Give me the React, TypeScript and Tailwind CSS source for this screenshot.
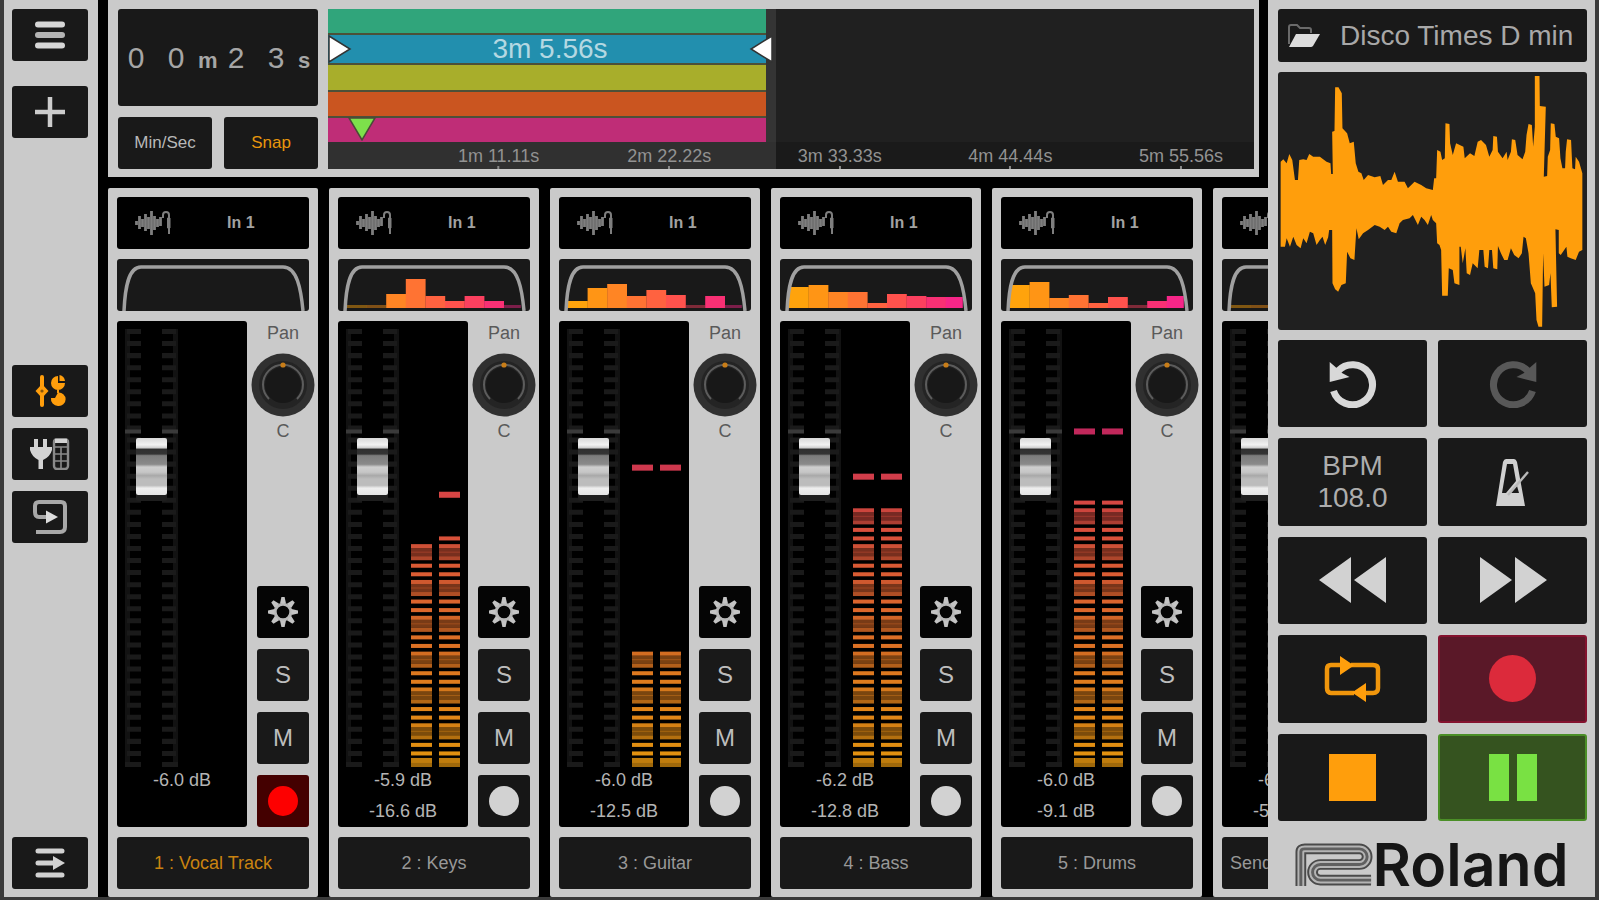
import React from 'react';
import clsx from 'clsx';

interface Track {
  label: string;
  fader: string;
  level?: string;
  eq: number[];
  meter: number[];
  peaks: (number | null)[];
  armed?: boolean;
  send?: boolean;
}

const tracks: Track[] = [
  { label: '1 : Vocal Track', fader: '-6.0 dB', eq: [], meter: [], peaks: [], armed: true },
  {
    label: '2 : Keys',
    fader: '-5.9 dB',
    level: '-16.6 dB',
    eq: [3, 3, 14, 29, 12, 7, 12, 7, 3],
    meter: [222, 231],
    peaks: [null, 268],
  },
  {
    label: '3 : Guitar',
    fader: '-6.0 dB',
    level: '-12.5 dB',
    eq: [7, 20, 24, 12, 18, 13, 3, 12, 3],
    meter: [115, 115],
    peaks: [295, 295],
  },
  {
    label: '4 : Bass',
    fader: '-6.2 dB',
    level: '-12.8 dB',
    eq: [21, 23, 16, 16, 5, 14, 12, 11, 11],
    meter: [258, 258],
    peaks: [286, 286],
  },
  {
    label: '5 : Drums',
    fader: '-6.0 dB',
    level: '-9.1 dB',
    eq: [23, 26, 10, 13, 5, 11, 3, 7, 12],
    meter: [266, 266],
    peaks: [331, 331],
  },
  {
    label: 'Send',
    fader: '-6.0 dB',
    level: '-50.0 dB',
    eq: [3, 3, 3, 3, 3, 3, 3, 3, 3],
    meter: [],
    peaks: [],
    send: true,
  },
];

const eqColors = ['#ffa30c', '#ff9515', '#ff8524', '#ff7333', '#ff6240', '#ff524d', '#fb405f', '#f83074', '#f62688'];

// song timeline, in seconds
const songLength = 386;
const clipEnd = 182.6;
const loopEnd = 185.56;
const playhead = 14;

const clips = ['bg-[#30a57b]', 'bg-[#228fae]', 'bg-[#a8ae2b]', 'bg-[#ca5520]', 'bg-[#bf2d77]'];

const marks = [
  { time: 71.11, text: '1m 11.11s' },
  { time: 142.22, text: '2m 22.22s' },
  { time: 213.33, text: '3m 33.33s' },
  { time: 284.44, text: '4m 44.44s' },
  { time: 355.56, text: '5m 55.56s' },
];

const percent = (time: number) => `${(time / songLength) * 100}%`;

const wavePoints =
  '62,485 70,478 80,490 88,462 97,480 105,540 114,540 118,480 130,478 140,480 148,462 160,470 180,470 200,485 212,490 214,522 219,522 217,395 224,393 226,262 236,262 246,280 248,385 262,400 270,430 282,425 288,490 296,515 305,520 312,540 325,525 345,532 362,528 370,555 385,540 395,540 405,515 415,545 435,545 445,565 465,545 485,555 500,565 520,570 524,535 530,535 533,450 543,455 548,480 556,475 558,370 570,372 572,430 580,465 590,430 612,440 616,475 632,460 645,468 655,425 665,420 680,435 690,470 700,450 702,408 713,410 716,455 730,475 742,455 745,480 755,455 758,418 768,420 775,465 790,478 798,455 802,405 808,372 818,375 822,440 827,380 827,228 841,228 842,318 860,320 854,530 864,528 866,470 873,450 875,370 886,372 890,410 900,415 904,475 910,505 918,505 920,455 924,418 936,420 940,505 948,508 950,470 960,485 970,520 ' +
  '970,750 960,755 950,780 935,775 925,770 922,740 905,765 899,760 899,690 889,688 894,920 878,922 874,820 870,855 856,860 852,760 849,980 838,980 832,960 828,880 815,850 808,760 800,715 793,710 788,760 778,775 765,765 755,745 745,780 735,780 725,760 716,738 714,808 702,805 698,750 690,750 686,805 676,800 672,750 660,750 655,805 640,790 632,825 622,820 618,745 610,790 604,740 600,740 600,855 585,850 580,810 568,805 565,887 548,887 545,750 540,735 533,730 530,670 520,660 515,645 505,675 495,660 485,650 475,675 460,645 450,655 430,660 420,670 410,700 395,695 385,680 375,690 360,680 345,675 325,690 310,700 297,718 290,685 284,780 272,775 262,755 258,850 245,855 235,875 226,868 218,850 217,690 208,690 205,712 196,735 188,710 180,720 170,735 160,700 150,695 140,730 130,715 122,745 110,735 100,710 90,740 80,715 75,740 62,740';

function mix(a: number[], b: number[], t: number) {
  return a.map((v, i) => Math.round(v + (b[i] - v) * t));
}

function meterColor(y: number) {
  const low = [226, 148, 14];
  const mid = [220, 104, 42];
  const high = [214, 68, 68];
  const top = [192, 38, 92];
  let c: number[];
  if (y < 150) c = mix(low, mid, y / 150);
  else if (y < 270) c = mix(mid, high, (y - 150) / 120);
  else c = mix(high, top, Math.min(1, (y - 270) / 65));
  return `rgb(${c.join(',')})`;
}

function meterRows(level: number) {
  const rows = [
    { y: 0, h: 4, o: 0.7 },
    { y: 4, h: 5, o: 0.85 },
  ];
  for (let base = 0; base < level; base += 35.67) {
    rows.push({ y: base + 11.5, h: 4, o: 1 });
    rows.push({ y: base + 20, h: 4, o: 1 });
    rows.push({ y: base + 27.5, h: 4, o: 0.8 });
    rows.push({ y: base + 31.5, h: 8, o: 0.55 });
    rows.push({ y: base + 35, h: 1, o: 0.4 });
    rows.push({ y: base + 39.5, h: 4, o: 0.95 });
  }
  return rows.filter((row) => row.y + row.h <= level + 1);
}

function LevelMeter({ meter, peaks }: { meter: number[]; peaks: (number | null)[] }) {
  return (
    <svg className="w-[49px] h-full" viewBox="0 0 49 436" preserveAspectRatio="none" aria-hidden="true">
      {meter.map((level, channel) => (
        <g key={channel}>
          {meterRows(level).map((row, i) => (
            <rect
              key={i}
              x={channel * 28}
              y={436 - row.y - row.h}
              width="21"
              height={row.h}
              fill={meterColor(row.y)}
              opacity={row.o}
            />
          ))}
          {peaks[channel] && (
            <rect
              x={channel * 28}
              y={436 - peaks[channel]! - 6}
              width="21"
              height="6"
              fill={meterColor(peaks[channel]!)}
            />
          )}
        </g>
      ))}
    </svg>
  );
}

function Fader({ label }: { label: string }) {
  const teeth = Array.from({ length: 36 }, (_, i) => i * 12);
  return (
    <div className="relative w-[53px] h-full">
      <svg className="w-full h-full" viewBox="0 0 53 436" preserveAspectRatio="none" aria-hidden="true">
        <path d="M0 0H5V436H0ZM48 0H53V436H48Z" fill="#121212" />
        {teeth.map((y) => (
          <path key={y} d={`M2 ${y}H16V${y + 5}H2ZM37 ${y}H51V${y + 5}H37Z`} fill="#1a1a1a" />
        ))}
        <path d="M0 431H16V436H0ZM37 431H53V436H37Z" fill="#1a1a1a" />
        <path d="M0 100H16V104H0ZM37 100H53V104H37Z" fill="#3a3a3a" />
      </svg>
      <input
        type="range"
        aria-label={`${label} volume`}
        max={1000}
        defaultValue={715}
        className="absolute inset-0 w-full h-full appearance-none bg-transparent [writing-mode:vertical-lr] [direction:rtl] [&::-webkit-slider-thumb]:appearance-none [&::-webkit-slider-thumb]:w-[31px] [&::-webkit-slider-thumb]:h-[57px] [&::-webkit-slider-thumb]:rounded-[2px] [&::-webkit-slider-thumb]:shadow-[0_6px_0_#1e1e1e] [&::-webkit-slider-thumb]:bg-[linear-gradient(#d8d8d8,#f2f2f2_12%,#d0d0d0_17%,#303030_20%,#343434_28%,#7c7c7c_31%,#8a8a8a_46%,#cfcfcf_51%,#c6c6c6_60%,#a9a9a9_66%,#bcbcbc_72%,#bcbcbc_83%,#eeeeee_88%,#e4e4e4)]"
      />
    </div>
  );
}

function PanKnob({ label }: { label: string }) {
  return (
    <div className="relative -mx-[6px] mt-2 size-16">
      <svg className="size-16" viewBox="0 0 64 64" aria-hidden="true">
        <circle cx="32" cy="32" r="31.5" fill="#303030" />
        <circle cx="32" cy="32" r="24" fill="#242424" />
        <circle cx="32" cy="32" r="18" fill="#181818" />
        <path d="M18 46A20 20 0 1 1 46 46" fill="none" stroke="#5c5c5c" strokeWidth="2" />
        <circle cx="32" cy="12" r="2.6" fill="#c87d18" />
      </svg>
      <input type="range" aria-label={`${label} pan`} className="absolute inset-0 size-full opacity-0" />
    </div>
  );
}

function InputIcon() {
  return (
    <svg className="w-9 h-[26px]" viewBox="0 0 36 26" fill="none" stroke="#7e7e7e" aria-hidden="true">
      <path d="M1.5 11V15M4.5 6V19M7.5 9V17M10.5 4V21M13.5 7V19M16.5 1V25M19.5 6V20M22.5 9V17M25.5 7V16" strokeWidth="2.8" />
      <path d="M28 8V5Q28 2 31 2T34 5V24" strokeWidth="2" />
      <path d="M32.5 8H35V18H32.5Z" fill="#7e7e7e" strokeWidth="1" />
    </svg>
  );
}

function EqGraph({ eq }: { eq: number[] }) {
  return (
    <svg className="w-full h-full" viewBox="0 0 192 52" preserveAspectRatio="none" aria-hidden="true">
      {eq.map((h, i) => (
        <rect
          key={i}
          x={9 + i * 19.6}
          y={49 - h}
          width={i === 8 ? 17 : 19.8}
          height={h}
          fill={eqColors[i]}
          opacity={h <= 3 ? 0.45 : 1}
        />
      ))}
      <path d="M7 52C8 30 11 8 24 8H166C180 8 184 30 186 52" fill="none" stroke="#a0a0a0" strokeWidth="3.5" />
    </svg>
  );
}

function ChannelStrip({ track }: { track: Track }) {
  const square = 'flex items-center justify-center h-[52px] rounded-[3px]';
  return (
    <section className="flex flex-col gap-2.5 w-[210px] shrink-0 bg-[#cacaca] rounded-[2px] px-[9px] pt-[9px] pb-2">
      <button className="flex items-center h-[52px] shrink-0 rounded-[3px] bg-black pl-[18px] text-[#a2a2a2]">
        <InputIcon />
        <span className="ml-14 font-bold text-base">In 1</span>
      </button>
      <button className="h-[52px] shrink-0 rounded-[3px] bg-[#191919]" aria-label={`${track.label} EQ`}>
        <EqGraph eq={track.eq} />
      </button>
      <div className="flex-1 min-h-0 flex gap-2.5">
        <div className="flex flex-col w-[130px] rounded-[3px] bg-black px-2 pt-2">
          <div className="flex-1 min-h-0 flex gap-3">
            <Fader label={track.label} />
            <LevelMeter meter={track.meter} peaks={track.peaks} />
          </div>
          <div className="flex flex-col gap-1 h-[60px] text-center text-lg leading-[27px] text-[#b4b4b4] whitespace-nowrap">
            <p>{track.fader}</p>
            <p>{track.level}</p>
          </div>
        </div>
        <div className="flex flex-col items-center w-[52px] text-lg text-[#5a5a5a]">
          <span className="leading-6">Pan</span>
          <PanKnob label={track.label} />
          <span className="leading-7">C</span>
          <div className="mt-auto w-full flex flex-col gap-[11px] text-2xl text-[#bdbdbd]">
            <button className={clsx(square, 'bg-[#050505]')} aria-label="Settings">
              <svg className="size-[30px]" viewBox="-15 -15 30 30" aria-hidden="true">
                <circle r="7.8" fill="none" stroke="#b8b8b8" strokeWidth="3" />
                {[0, 45, 90, 135, 180, 225, 270, 315].map((deg) => (
                  <path key={deg} d="M-3 -8.500L-1.600 -15H1.600L3 -8.500Z" fill="#c4c4c4" transform={`rotate(${deg})`} />
                ))}
              </svg>
            </button>
            <button className={clsx(square, 'bg-[#191919]')}>S</button>
            <button className={clsx(square, 'bg-[#191919]')}>M</button>
            <button className={clsx(square, track.armed ? 'bg-[#440000]' : 'bg-[#161616]')} aria-label="Arm">
              <span className={clsx('size-[30px] rounded-full', track.armed ? 'bg-[#fd0000]' : 'bg-[#d2d2d2]')} />
            </button>
          </div>
        </div>
      </div>
      <button
        className={clsx(
          'flex items-center h-[52px] shrink-0 rounded-[3px] bg-[#191919] text-lg',
          track.send ? 'justify-start pl-2' : 'justify-center',
          track.armed ? 'text-[#c98310]' : 'text-[#989898]'
        )}
      >
        {track.label}
      </button>
    </section>
  );
}

function SideButton({ label, className, children }: { label: string; className?: string; children: React.ReactNode }) {
  return (
    <button
      aria-label={label}
      className={clsx('flex items-center justify-center h-[52px] shrink-0 rounded-[3px] bg-[#191919]', className)}
    >
      {children}
    </button>
  );
}

function Sidebar() {
  return (
    <nav className="flex flex-col w-[94px] shrink-0 bg-[#cacaca] pl-2 pr-2.5 pt-[9px] pb-2">
      <SideButton label="Menu">
        <svg className="w-8 h-8" viewBox="0 0 32 32" stroke="#d6d6d6" strokeWidth="6" strokeLinecap="round" aria-hidden="true">
          <path d="M4 5.5H28M4 26.5H28" />
          <path d="M4 16H28" stroke="#b4b4b4" />
        </svg>
      </SideButton>
      <SideButton label="Add track" className="mt-[25px]">
        <svg className="w-8 h-8" viewBox="0 0 32 32" stroke="#cccccc" strokeWidth="4.5" aria-hidden="true">
          <path d="M1 16H31M16 1V31" />
        </svg>
      </SideButton>
      <div className="flex flex-col gap-[11px] mt-[227px]">
        <SideButton label="Mixer">
          <svg className="w-8 h-8" viewBox="0 0 32 32" fill="#ff9e0c" aria-hidden="true">
            <rect x="6" y="0" width="4" height="32" rx="2" />
            <path d="M8 9L14.5 16L8 23L1.5 16Z" />
            <circle cx="8" cy="16" r="1.6" fill="#8a5508" />
            <path d="M24 1A7 7 0 1 0 31 8L24 8ZM25.500 0A7 7 0 0 1 31 6L25.500 6Z" />
            <path d="M24 31A7 7 0 0 1 17 23L21 23L24 17.500A6.800 6.800 0 1 1 24 31Z" />
            <rect x="23" y="15" width="2" height="3" />
          </svg>
        </SideButton>
        <SideButton label="Effects">
          <svg className="w-10 h-8" viewBox="0 0 40 32" aria-hidden="true">
            <path d="M4 1H8V9H13V1H17V9H22V12Q20 19 13 22V31H8.500V22Q2 19 0 12V9H4Z" fill="#d2d2d2" />
            <rect x="24" y="1" width="14" height="30" rx="3" fill="none" stroke="#8a8a8a" strokeWidth="2.4" />
            <path d="M24 9H38M24 16H38M24 23H38M31 9V31" stroke="#8a8a8a" strokeWidth="1.600" />
            <path d="M25 3H37" stroke="#d2d2d2" strokeWidth="4" />
          </svg>
        </SideButton>
        <SideButton label="Routing">
          <svg className="w-9 h-9" viewBox="0 0 36 36" fill="none" stroke="#a8a8a8" strokeWidth="4" aria-hidden="true">
            <path d="M15 18H7Q3 18 3 13V7Q3 3 7 3H29Q33 3 33 7V28Q33 33 28 33H4" />
            <path d="M14 11.500L26 18L14 24.500Z" fill="#dcdcdc" stroke="none" />
          </svg>
        </SideButton>
      </div>
      <SideButton label="Collapse" className="mt-auto">
        <svg className="w-8 h-8" viewBox="0 0 32 32" stroke="#d2d2d2" strokeWidth="5" strokeLinecap="round" aria-hidden="true">
          <path d="M4 4H28M4 16H22M4 28H28" />
          <path d="M19 9L31 16L19 23Z" fill="#d2d2d2" stroke="none" />
        </svg>
      </SideButton>
    </nav>
  );
}

function Timeline() {
  return (
    <div className="relative flex-1 flex flex-col bg-[#202020] overflow-hidden">
      <div className="flex-1 flex">
        <div className="flex flex-col gap-0.5 bg-[#4c5038]" style={{ width: percent(clipEnd) }}>
          {clips.map((color, i) => (
            <div key={color} className={clsx('flex-1 flex items-center justify-center pl-1.5 text-[28px] leading-none text-[#b4d8e2]', color)}>
              {i === 1 && '3m 5.56s'}
            </div>
          ))}
        </div>
        <div className="bg-[#343434]" style={{ width: percent(loopEnd + 1 - clipEnd) }} />
      </div>
      <div className="relative h-[27px] bg-[#1a1a1a] text-lg text-[#929292]">
        <div className="h-full bg-[#303030]" style={{ width: percent(loopEnd + 1) }} />
        {marks.map((mark) => (
          <span
            key={mark.text}
            className="absolute bottom-0 -translate-x-1/2 flex flex-col items-center leading-5 whitespace-nowrap"
            style={{ left: percent(mark.time) }}
          >
            {mark.text}
            <span className="w-0.5 h-[3px] bg-[#8a8a8a]" />
          </span>
        ))}
      </div>
      <svg className="absolute left-0 top-[26px] w-6 h-7" viewBox="0 0 24 28" aria-hidden="true">
        <path d="M1 1L22 14L1 27Z" fill="#fff" stroke="#333" strokeWidth="1.500" />
      </svg>
      <svg
        className="absolute top-[26px] w-6 h-7 -translate-x-full"
        style={{ left: percent(loopEnd) }}
        viewBox="0 0 24 28"
        aria-hidden="true"
      >
        <path d="M23 1L2 14L23 27Z" fill="#fff" stroke="#333" strokeWidth="1.500" />
      </svg>
      <svg
        className="absolute top-[108px] w-8 h-6 -translate-x-1/2"
        style={{ left: percent(playhead) }}
        viewBox="0 0 32 24"
        aria-hidden="true"
      >
        <path d="M3 1H29L16 23Z" fill="#7de04b" stroke="#4a4a38" strokeWidth="1.500" />
      </svg>
    </div>
  );
}

function TopPanel() {
  return (
    <header className="flex gap-2.5 h-[177px] shrink-0 mr-[9px] bg-[#cacaca] pl-2.5 pr-[5px] pt-[9px] pb-2">
      <div className="flex flex-col gap-[11px] w-[200px]">
        <div className="flex-1 flex items-center rounded-[3px] bg-[#191919] text-[#a6a6a6] text-3xl">
          <span className="w-9 text-center">0</span>
          <span className="w-11 text-center">0</span>
          <span className="w-5 mt-2 text-[22px] font-bold">m</span>
          <span className="w-9 text-center">2</span>
          <span className="w-11 text-center">3</span>
          <span className="w-5 mt-2 text-[22px] font-bold">s</span>
        </div>
        <div className="grid grid-cols-2 gap-3 h-[52px] text-[17px]">
          <button className="rounded-[3px] bg-[#191919] text-[#b8b8b8]">Min/Sec</button>
          <button className="rounded-[3px] bg-[#191919] text-[#e8960c]">Snap</button>
        </div>
      </div>
      <Timeline />
    </header>
  );
}

function PadButton({ label, className, children }: { label: string; className?: string; children: React.ReactNode }) {
  return (
    <button
      aria-label={label}
      className={clsx('flex items-center justify-center rounded-[3px]', className ?? 'bg-[#191919]')}
    >
      {children}
    </button>
  );
}

function UndoIcon({ className }: { className: string }) {
  return (
    <svg className={clsx('size-12', className)} viewBox="0 0 48 48" aria-hidden="true">
      <path d="M9 11A20 20 0 1 1 4.500 31" fill="none" stroke="currentColor" strokeWidth="7" />
      <path d="M0.700 2L7 7.500L13 13L20.500 17L0.700 22Z" fill="currentColor" />
    </svg>
  );
}

function Transport() {
  return (
    <aside className="flex flex-col gap-2.5 w-[327px] shrink-0 bg-[#cacaca] pt-[9px] px-2">
      <button className="flex items-center h-[53px] shrink-0 rounded-[3px] bg-[#191919] ml-0.5 pl-[10px] text-[28px] text-[#a8a8a8] whitespace-nowrap">
        <svg className="w-8 h-6 mr-5" viewBox="0 0 32 24" aria-hidden="true">
          <path d="M1 20V3Q1 1 3 1H9L12 4H21Q23 4 23 6V9" fill="none" stroke="#6a6a6a" strokeWidth="2" />
          <path d="M1 23L8 10H32L25 22Q24 23 23 23Z" fill="#dcdcdc" />
        </svg>
        Disco Times D min
      </button>
      <div className="h-[258px] shrink-0 rounded-[3px] bg-[#202020] ml-0.5">
        <svg className="w-full h-full" viewBox="54 216 930 774" preserveAspectRatio="none" aria-hidden="true">
          <polygon points={wavePoints} fill="#ff9e0c" />
        </svg>
      </div>
      <div className="flex-1 ml-0.5 grid grid-cols-2 grid-rows-5 gap-[11px]">
        <PadButton label="Undo">
          <UndoIcon className="text-[#d8d8d8]" />
        </PadButton>
        <PadButton label="Redo">
          <UndoIcon className="-scale-x-100 text-[#585858]" />
        </PadButton>
        <PadButton label="BPM 108.0">
          <span className="text-[28px] leading-8 text-[#adadad]">
            BPM
            <br />
            108.0
          </span>
        </PadButton>
        <PadButton label="Metronome">
          <svg className="w-[34px] h-[47px]" viewBox="0 0 34 47" aria-hidden="true">
            <path
              d="M10 0H18Q20 0 21 3L29 47H0L7 3Q8 0 10 0ZM11 5L6 34H10L20 22L17 5ZM21 27L15 34H23Z"
              fill="#d0d0d0"
              fillRule="evenodd"
            />
            <path d="M12 36L32 13" stroke="#b8b8b8" strokeWidth="2.400" />
          </svg>
        </PadButton>
        <PadButton label="Rewind">
          <svg className="w-[68px] h-[46px]" viewBox="0 0 68 46" fill="#d2d2d2" aria-hidden="true">
            <path d="M0 23L32 0V46ZM35 23L67 0V46Z" />
          </svg>
        </PadButton>
        <PadButton label="Fast forward">
          <svg className="w-[68px] h-[46px] -scale-x-100" viewBox="0 0 68 46" fill="#d2d2d2" aria-hidden="true">
            <path d="M0 23L32 0V46ZM35 23L67 0V46Z" />
          </svg>
        </PadButton>
        <PadButton label="Loop">
          <svg className="w-[57px] h-[46px]" viewBox="0 0 57 46" aria-hidden="true">
            <path
              d="M16 9H7Q3 9 3 13V32Q3 37 7 37H30M41 37H49Q54 37 54 32V13Q54 9 49 9H27"
              fill="none"
              stroke="#f0960c"
              strokeWidth="4.500"
            />
            <path d="M16 0V19L30 9.500ZM42 27V46L28 36.500Z" fill="#ff9e0c" />
          </svg>
        </PadButton>
        <PadButton label="Record" className="bg-[#5a1828] border-2 border-[#84122e]">
          <span className="size-[47px] rounded-full bg-[#dc2a3b]" />
        </PadButton>
        <PadButton label="Stop">
          <span className="size-[47px] bg-[#ff9e0c]" />
        </PadButton>
        <PadButton label="Pause" className="bg-[#35531f] border-2 border-[#4b8f27] gap-2">
          <span className="w-5 h-[47px] bg-[#79e143]" />
          <span className="w-5 h-[47px] bg-[#79e143]" />
        </PadButton>
      </div>
      <div className="flex items-center justify-center h-[66px] shrink-0 text-[#161616]">
        <svg className="w-[78px] h-[43px]" viewBox="0 0 80 44" fill="none" aria-hidden="true">
          <path d="M6 44V9Q6 6 10 6H66A8 8 0 0 1 66 22H26A8 8 0 0 0 26 38H78" stroke="#4a4a4a" strokeWidth="11" />
          <path d="M6 44V9Q6 6 10 6H66A8 8 0 0 1 66 22H26A8 8 0 0 0 26 38H78" stroke="#b4b4b4" strokeWidth="7" />
          <path d="M6 44V9Q6 6 10 6H66A8 8 0 0 1 66 22H26A8 8 0 0 0 26 38H78" stroke="#606060" strokeWidth="3" />
        </svg>
        <span className="font-[Inter,sans-serif] font-semibold text-[59px] leading-none">Roland</span>
      </div>
    </aside>
  );
}

export default function App() {
  return (
    <div className="flex h-screen min-h-[720px] bg-black border-x-4 border-b-[3px] border-[#3a3a3a] overflow-hidden font-['Liberation_Sans',Arial,sans-serif]">
      <Sidebar />
      <main className="flex-1 min-w-0 flex flex-col gap-[11px] ml-2.5">
        <TopPanel />
        <div className="flex-1 min-h-0 flex gap-[11px] overflow-hidden">
          {tracks.map((track) => (
            <ChannelStrip key={track.label} track={track} />
          ))}
        </div>
      </main>
      <Transport />
    </div>
  );
}
